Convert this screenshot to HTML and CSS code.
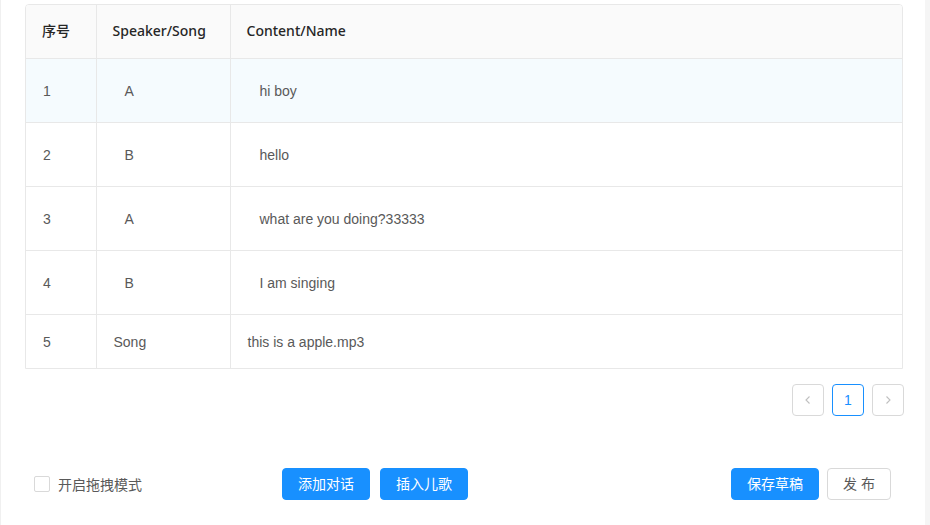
FILE: index.html
```html
<!DOCTYPE html>
<html lang="zh">
<head>
<meta charset="utf-8">
<link rel="stylesheet" href="styles.css">
</head>
<body>
<div class="page">
  <div class="table-wrap">
    <table class="grid">
      <colgroup>
        <col class="c-idx">
        <col class="c-spk">
        <col class="c-txt">
      </colgroup>
      <thead>
        <tr><th>序号</th><th>Speaker/Song</th><th>Content/Name</th></tr>
      </thead>
      <tbody>
        <tr class="row-edit row-hover"><td>1</td><td><span class="ind-spk">A</span></td><td><span class="ind-txt">hi boy</span></td></tr>
        <tr class="row-edit"><td>2</td><td><span class="ind-spk">B</span></td><td><span class="ind-txt">hello</span></td></tr>
        <tr class="row-edit"><td>3</td><td><span class="ind-spk">A</span></td><td><span class="ind-txt">what are you doing?33333</span></td></tr>
        <tr class="row-edit"><td>4</td><td><span class="ind-spk">B</span></td><td><span class="ind-txt">I am singing</span></td></tr>
        <tr class="row-song"><td>5</td><td>Song</td><td>this is a apple.mp3</td></tr>
      </tbody>
    </table>
  </div>
  <div class="pager">
    <button class="pg"><svg width="12" height="12" viewBox="0 0 12 12"><path d="M7.5 2.5 L4 6 L7.5 9.5" fill="none" stroke="#bfbfbf" stroke-width="1.1"/></svg></button>
    <button class="pg active">1</button>
    <button class="pg"><svg width="12" height="12" viewBox="0 0 12 12"><path d="M4.5 2.5 L8 6 L4.5 9.5" fill="none" stroke="#bfbfbf" stroke-width="1.1"/></svg></button>
  </div>
  <div class="footer">
    <label class="check"><span class="box"></span><span>开启拖拽模式</span></label>
    <div class="group g-mid">
      <button class="btn primary">添加对话</button>
      <button class="btn primary">插入儿歌</button>
    </div>
    <div class="group g-right">
      <button class="btn primary">保存草稿</button>
      <button class="btn">发 布</button>
    </div>
  </div>
</div>
</body>
</html>
```
FILE: styles.css
```css
html, body {
  margin: 0;
  padding: 0;
  background: #fff;
}
body {
  font-family: "Liberation Sans", "Noto Sans CJK SC", sans-serif;
  font-size: 14px;
  color: #595959;
}
.page {
  width: 930px;
  height: 525px;
  box-sizing: border-box;
  border-left: 1px solid #f0f0f0;
  border-right: 5px solid #f5f5f5;
  padding: 4px 22px 0 24px;
}
.table-wrap {
  border: 1px solid #e8e8e8;
  border-radius: 4px 4px 0 0;
  overflow: hidden;
}
.grid {
  width: 100%;
  border-collapse: collapse;
  table-layout: fixed;
}
.c-idx { width: 70px; }
.c-spk { width: 134px; }
.grid th, .grid td {
  text-align: left;
  padding: 1px 16px 0 17px;
  border-right: 1px solid #e8e8e8;
  border-bottom: 1px solid #e8e8e8;
  vertical-align: middle;
  line-height: 22px;
}
.grid th:last-child, .grid td:last-child { border-right: none; }
.grid tbody tr:last-child td { border-bottom: none; }
.grid th {
  height: 52px;
  background: #fafafa;
  color: #262626;
  font-family: "Noto Sans", "Noto Sans CJK SC", sans-serif;
  font-weight: 500;
  padding-top: 0;
  padding-bottom: 1px;
  padding-left: 16px;
}
.row-edit td { height: 62px; }
.row-song td { height: 52px; }
.row-hover td { background: #f5fbfe; }
.ind-spk { padding-left: 11px; }
.ind-txt { padding-left: 12px; }
.pager {
  display: flex;
  justify-content: flex-end;
  gap: 8px;
  margin-top: 15px;
  margin-right: -1px;
}
.pg {
  width: 32px;
  height: 32px;
  box-sizing: border-box;
  border: 1px solid #d9d9d9;
  border-radius: 4px;
  background: #fff;
  font-family: inherit;
  font-size: 14px;
  color: #595959;
  padding: 0;
  display: flex;
  align-items: center;
  justify-content: center;
}
.pg.active {
  border-color: #1890ff;
  color: #1890ff;
}
.footer {
  display: grid;
  grid-template-columns: 248px 1fr auto;
  align-items: center;
  margin-top: 52px;
  padding-left: 9px;
  padding-right: 12px;
}
.check {
  display: flex;
  align-items: center;
  gap: 8px;
  color: #595959;
}
.box {
  width: 16px;
  height: 16px;
  box-sizing: border-box;
  border: 1px solid #d9d9d9;
  border-radius: 2px;
  background: #fff;
}
.group {
  display: flex;
}
.g-mid { gap: 10px; }
.g-right { gap: 8px; }
.btn {
  height: 32px;
  box-sizing: border-box;
  padding: 0 15px;
  border: 1px solid #d9d9d9;
  border-radius: 4px;
  background: #fff;
  color: #595959;
  font-family: inherit;
  font-size: 14px;
  line-height: 30px;
}
.btn.primary {
  background: #1890ff;
  border-color: #1890ff;
  color: #fff;
}
```
